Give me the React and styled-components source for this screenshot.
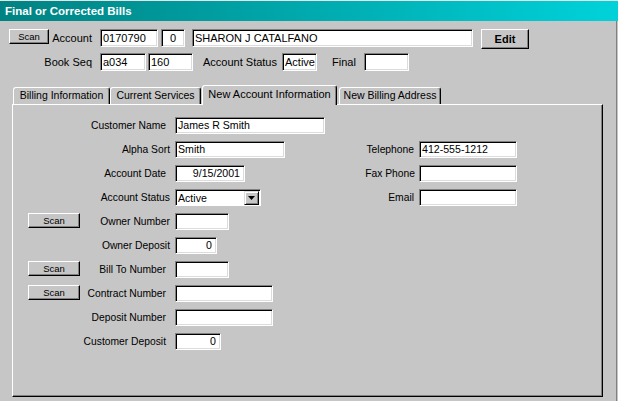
import React from 'react';
import styled, { createGlobalStyle } from 'styled-components';

const GlobalStyle = createGlobalStyle`
  html, body {
    margin: 0;
    padding: 0;
    background: #c6c6c6;
  }
  body {
    font-family: "Liberation Sans", Arial, sans-serif;
    color: #000;
  }
  * {
    box-sizing: border-box;
  }
`;

const tabs = [
  { title: 'Billing Information', w: 97, ml: 1 },
  { title: 'Current Services', w: 91, ml: 0 },
  { title: 'New Account Information', w: 135, ml: 1, active: true },
  { title: 'New Billing Address', w: 102, ml: 2 },
];

const leftRows = [
  { label: 'Customer Name', w: 150, value: 'James R Smith' },
  { label: 'Alpha Sort', w: 110, value: 'Smith', near: true },
  { label: 'Account Date', w: 70, value: '9/15/2001', right: true },
  { label: 'Account Status', select: 'Active', near: true },
  { label: 'Owner Number', w: 54, scan: true, near: true },
  { label: 'Owner Deposit', w: 42, value: '0', right: true, near: true },
  { label: 'Bill To Number', w: 54, scan: true },
  { label: 'Contract Number', w: 98, scan: true },
  { label: 'Deposit Number', w: 98 },
  { label: 'Customer Deposit', w: 46, value: '0', right: true },
];

const rightRows = [
  { label: 'Telephone', value: '412-555-1212' },
  { label: 'Fax Phone', value: '', near: true },
  { label: 'Email', value: '' },
];

const App = () => (
  <>
    <GlobalStyle />
    <Window>
      <TitleBar>Final or Corrected Bills</TitleBar>
      <Body>
        <HeaderRow>
          <Button $w={40} $h={15} $small>Scan</Button>
          <HeadLabel $ml={3} $w={40}>Account</HeadLabel>
          <Field $ml={8} $w={58} $h={18} $big>0170790</Field>
          <Field $ml={3} $w={24} $h={18} $big $center>0</Field>
          <Field $ml={7} $w={281} $h={18} $big>SHARON J CATALFANO</Field>
          <Button $ml={8} $w={48} $h={20} $bold>Edit</Button>
        </HeaderRow>
        <HeaderRow $second>
          <HeadLabel $w={83}>Book Seq</HeadLabel>
          <Field $ml={8} $w={46} $h={18} $big>a034</Field>
          <Field $ml={2} $w={45} $h={18} $big>160</Field>
          <HeadLabel $ml={10} $w={73}>Account Status</HeadLabel>
          <Field $ml={6} $w={35} $h={18} $big>Active</Field>
          <HeadLabel $ml={15} $w={21}>Final</HeadLabel>
          <Field $ml={11} $w={45} $h={18} $big />
        </HeaderRow>

        <TabStrip>
          {tabs.map((t) => (
            <Tab key={t.title} $w={t.w} $ml={t.ml} $active={t.active}>
              {t.title}
            </Tab>
          ))}
        </TabStrip>
        <Panel>
          <LeftForm>
            {leftRows.map((r) => (
              <React.Fragment key={r.label}>
                <ScanCell>
                  {r.scan && <Button $w={52} $h={15} $small>Scan</Button>}
                </ScanCell>
                <FormLabel $near={r.near}>{r.label}</FormLabel>
                <InputCell>
                  {r.select ? (
                    <Select>
                      <span>{r.select}</span>
                      <DropButton>
                        <svg width="7" height="4" viewBox="0 0 7 4">
                          <path d="M0 0h7L3.5 4z" fill="#000" />
                        </svg>
                      </DropButton>
                    </Select>
                  ) : (
                    <Field $w={r.w} $h={17} $right={r.right}>
                      {r.value}
                    </Field>
                  )}
                </InputCell>
              </React.Fragment>
            ))}
          </LeftForm>
          <RightForm>
            {rightRows.map((r) => (
              <React.Fragment key={r.label}>
                <FormLabel $near={r.near} $pad={5}>{r.label}</FormLabel>
                <InputCell>
                  <Field $w={98} $h={17}>{r.value}</Field>
                </InputCell>
              </React.Fragment>
            ))}
          </RightForm>
        </Panel>
      </Body>
    </Window>
  </>
);

export default App;

const Window = styled.div`
  width: 618px;
  height: 401px;
  background: #c6c6c6;
  border-top: 1px solid #e4e4e4;
  overflow: hidden;
`;

const TitleBar = styled.div`
  height: 20px;
  padding-left: 5px;
  background: linear-gradient(to right, #008282, #00d2da);
  color: #fff;
  font-weight: bold;
  font-size: 11.5px;
  line-height: 20px;
  white-space: nowrap;
`;

const Body = styled.div`
  width: 617px;
  height: 380px;
  padding-top: 8px;
  border-right: 1px solid #808080;
`;

const HeaderRow = styled.div`
  display: flex;
  align-items: flex-start;
  padding-left: 9px;
  height: 20px;
  margin-top: ${(p) => (p.$second ? '4px' : '0')};
`;

const HeadLabel = styled.div`
  width: ${(p) => p.$w}px;
  margin-left: ${(p) => p.$ml || 0}px;
  height: 18px;
  line-height: 18px;
  font-size: 11px;
  text-align: right;
  white-space: nowrap;
`;

const Field = styled.div`
  width: ${(p) => p.$w}px;
  height: ${(p) => p.$h}px;
  margin-left: ${(p) => p.$ml || 0}px;
  background: #fff;
  border: 1px solid;
  border-color: #808080 #fff #fff #808080;
  box-shadow: inset 1px 1px 0 #000, inset -1px -1px 0 #dcdcdc;
  padding: 0 ${(p) => (p.$right ? '4px' : '2px')} 0 2px;
  font-size: ${(p) => (p.$big ? '11px' : '10.6px')};
  line-height: ${(p) => p.$h - 2}px;
  text-align: ${(p) => (p.$right ? 'right' : p.$center ? 'center' : 'left')};
  white-space: nowrap;
  overflow: hidden;
`;

const Button = styled.div`
  width: ${(p) => p.$w}px;
  height: ${(p) => p.$h}px;
  margin-left: ${(p) => p.$ml || 0}px;
  background: #c6c6c6;
  border: 1px solid;
  border-color: #fff #000 #000 #fff;
  box-shadow: inset -1px -1px 0 #808080;
  display: flex;
  align-items: center;
  justify-content: center;
  font-size: ${(p) => (p.$small ? '9.5px' : '11px')};
  font-weight: ${(p) => (p.$bold ? 'bold' : 'normal')};
  padding-bottom: 1px;
`;

const TabStrip = styled.div`
  display: flex;
  align-items: flex-end;
  height: 20px;
  margin: 12px 0 -1px 12px;
`;

const Tab = styled.div`
  position: relative;
  z-index: ${(p) => (p.$active ? 1 : 0)};
  width: ${(p) => p.$w}px;
  height: ${(p) => (p.$active ? 20 : 17)}px;
  margin-left: ${(p) => p.$ml}px;
  margin-bottom: ${(p) => (p.$active ? 0 : 1)}px;
  background: #c6c6c6;
  border-top: 1px solid #fff;
  border-left: 1px solid #fff;
  border-right: 1px solid #000;
  border-radius: 3px 3px 0 0;
  box-shadow: inset -1px 0 0 #808080;
  font-size: ${(p) => (p.$active ? '11px' : '10.5px')};
  line-height: ${(p) => (p.$active ? 17 : 15)}px;
  text-align: center;
  white-space: nowrap;
`;

const Panel = styled.div`
  display: flex;
  align-items: flex-start;
  width: 591px;
  height: 293px;
  margin-left: 12px;
  padding: 12px 0 0 15px;
  border: 1px solid;
  border-color: #fff #000 #000 #fff;
  box-shadow: inset -1px -1px 0 #808080;
`;

const LeftForm = styled.div`
  display: grid;
  grid-template-columns: 52px 95px 150px;
  grid-auto-rows: 17px;
  row-gap: 7px;
`;

const RightForm = styled.div`
  display: grid;
  grid-template-columns: 76px 98px;
  grid-auto-rows: 17px;
  row-gap: 7px;
  margin: 24px 0 0 18px;
`;

const ScanCell = styled.div`
  display: flex;
  align-items: flex-start;
`;

const FormLabel = styled.div`
  font-size: 10.3px;
  line-height: 17px;
  text-align: right;
  white-space: nowrap;
  padding-right: ${(p) => (p.$pad != null ? p.$pad - (p.$near ? 1 : 0) : p.$near ? 5 : 9)}px;
`;

const InputCell = styled.div`
  display: flex;
`;

const Select = styled.div`
  width: 86px;
  height: 17px;
  display: flex;
  align-items: center;
  justify-content: space-between;
  background: #fff;
  border: 1px solid;
  border-color: #808080 #fff #fff #808080;
  box-shadow: inset 1px 1px 0 #000;
  padding: 1px 1px 0 2px;
  font-size: 10.6px;
`;

const DropButton = styled.div`
  width: 15px;
  height: 14px;
  margin-top: -1px;
  display: flex;
  align-items: center;
  justify-content: center;
  background: #c6c6c6;
  border: 1px solid;
  border-color: #dcdcdc #000 #000 #dcdcdc;
  box-shadow: inset 1px 1px 0 #fff, inset -1px -1px 0 #808080;
`;
